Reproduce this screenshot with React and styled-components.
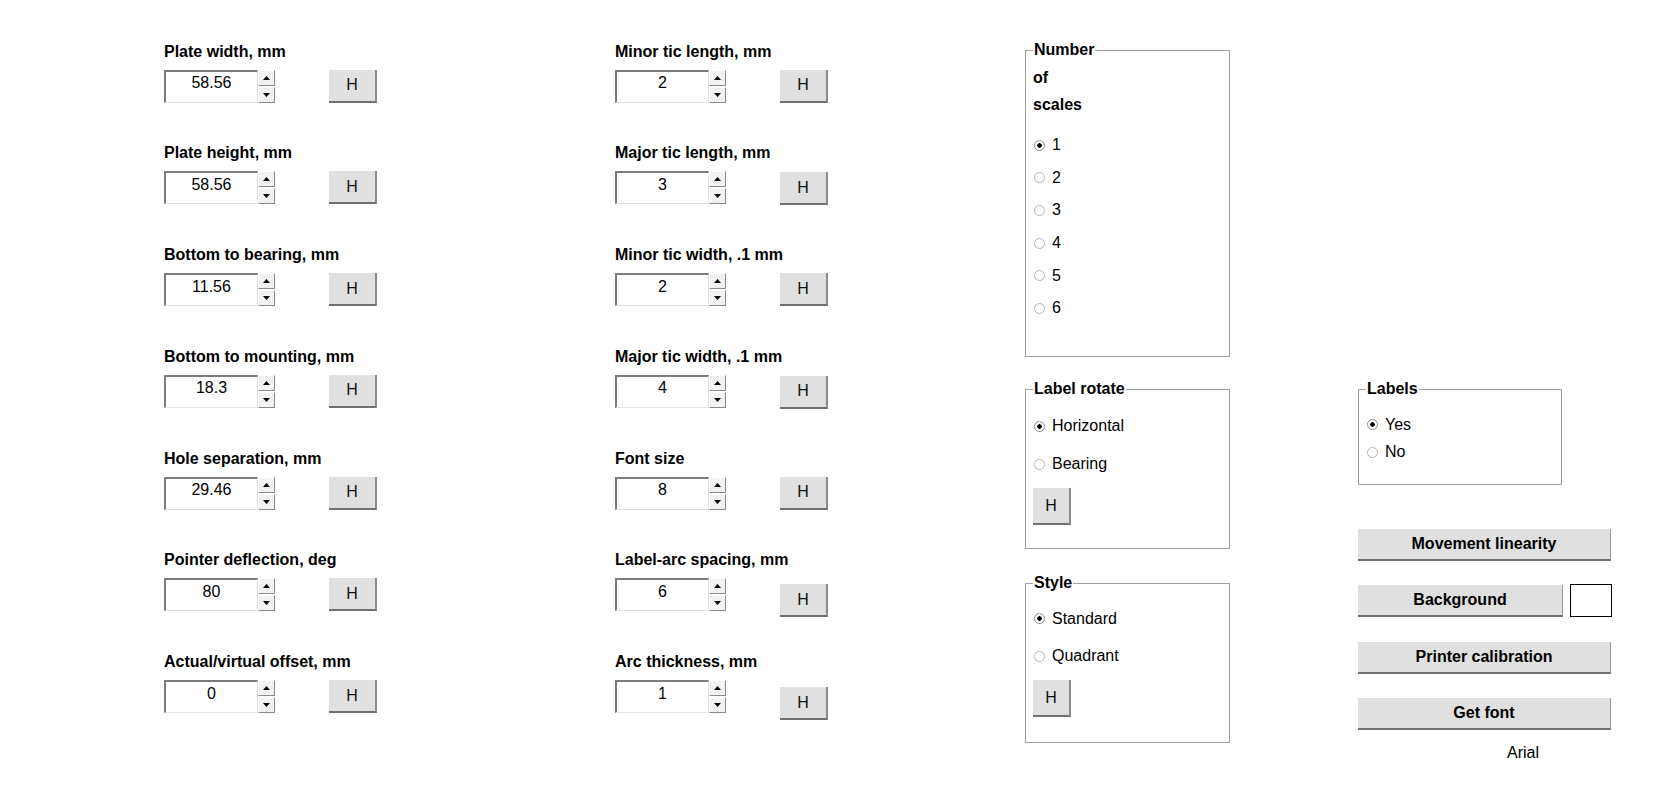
import React from 'react';
import styled, { createGlobalStyle } from 'styled-components';

const GlobalStyle = createGlobalStyle`
  body {
    margin: 0;
    background: #ffffff;
    font-family: "Liberation Sans", Arial, sans-serif;
    color: #000000;
  }
`;

const leftFields = [
  { label: 'Plate width, mm', value: '58.56' },
  { label: 'Plate height, mm', value: '58.56' },
  { label: 'Bottom to bearing, mm', value: '11.56' },
  { label: 'Bottom to mounting, mm', value: '18.3' },
  { label: 'Hole separation, mm', value: '29.46' },
  { label: 'Pointer deflection, deg', value: '80' },
  { label: 'Actual/virtual offset, mm', value: '0' },
];

const midFields = [
  { label: 'Minor tic length, mm', value: '2', drop: 0 },
  { label: 'Major tic length, mm', value: '3', drop: 1 },
  { label: 'Minor tic width, .1 mm', value: '2', drop: 0 },
  { label: 'Major tic width, .1 mm', value: '4', drop: 1 },
  { label: 'Font size', value: '8', drop: 0 },
  { label: 'Label-arc spacing, mm', value: '6', drop: 6 },
  { label: 'Arc thickness, mm', value: '1', drop: 7 },
];

const Spinner = () => (
  <SpinBox>
    <SpinHalf>
      <svg width="7" height="4" viewBox="0 0 7 4"><path d="M0 4 L3.5 0 L7 4 Z" fill="#000" /></svg>
    </SpinHalf>
    <SpinHalf>
      <svg width="7" height="4" viewBox="0 0 7 4"><path d="M0 0 L3.5 4 L7 0 Z" fill="#000" /></svg>
    </SpinHalf>
  </SpinBox>
);

const Field = ({ label, value, gap, drop = 0 }) => (
  <FieldRow>
    <FieldLabel>{label}</FieldLabel>
    <Controls>
      <NumInput defaultValue={value} readOnly />
      <Spinner />
      <HButton $gap={gap} $drop={drop}>H</HButton>
    </Controls>
  </FieldRow>
);

const RadioItem = ({ label, checked, height }) => (
  <RadioRow $h={height}>
    <RadioDot $on={checked} />
    <span>{label}</span>
  </RadioRow>
);

const App = () => (
  <>
    <GlobalStyle />
    <Page>
      <Column $w={451} $mt={1.5}>
        {leftFields.map((f) => (
          <Field key={f.label} {...f} gap={54} />
        ))}
      </Column>
      <Column $w={410} $mt={1.5}>
        {midFields.map((f) => (
          <Field key={f.label} {...f} gap={54} />
        ))}
      </Column>
      <Column $w={333}>
        <Group $w={205} $h={316}>
          <Legend>Number</Legend>
          <LegendRest>
            <div>of</div>
            <div>scales</div>
          </LegendRest>
          <RadioList $top={11}>
            {['1', '2', '3', '4', '5', '6'].map((n) => (
              <RadioItem key={n} label={n} checked={n === '1'} height={32.6} />
            ))}
          </RadioList>
        </Group>
        <Group $w={205} $h={169} $mt={23}>
          <Legend>Label rotate</Legend>
          <RadioList $top={9}>
            <RadioItem label="Horizontal" checked height={38} />
            <RadioItem label="Bearing" height={38} />
          </RadioList>
          <BoxButton>H</BoxButton>
        </Group>
        <Group $w={205} $h={169} $mt={25}>
          <Legend>Style</Legend>
          <RadioList $top={8}>
            <RadioItem label="Standard" checked height={37.5} />
            <RadioItem label="Quadrant" height={37.5} />
          </RadioList>
          <BoxButton>H</BoxButton>
        </Group>
      </Column>
      <SideColumn>
        <Group $w={204} $h={105} $mt={339}>
          <Legend>Labels</Legend>
          <RadioList $top={13}>
            <RadioItem label="Yes" checked height={27.5} />
            <RadioItem label="No" height={27.5} />
          </RadioList>
        </Group>
        <WideButton $mt={44}>Movement linearity</WideButton>
        <ButtonLine>
          <WideButton $w={205}>Background</WideButton>
          <Swatch />
        </ButtonLine>
        <WideButton $mt={25}>Printer calibration</WideButton>
        <WideButton $mt={24}>Get font</WideButton>
        <FontName>Arial</FontName>
      </SideColumn>
    </Page>
  </>
);

const Page = styled.div`
  display: flex;
  align-items: flex-start;
  padding: 41px 0 0 164px;
  font-family: "Liberation Sans", Arial, sans-serif;
  font-size: 16px;
`;

const Column = styled.div`
  width: ${(p) => p.$w}px;
  margin-top: ${(p) => p.$mt || 0}px;
  flex: none;
  display: flex;
  flex-direction: column;
`;

const SideColumn = styled.div`
  width: 256px;
  display: flex;
  flex-direction: column;
`;

const FieldRow = styled.div`
  height: 101.75px;
  display: flex;
  flex-direction: column;
`;

const FieldLabel = styled.div`
  font-weight: bold;
  font-size: 16px;
  line-height: 18px;
  margin-bottom: 9px;
  white-space: nowrap;
`;

const Controls = styled.div`
  display: flex;
  align-items: flex-start;
`;

const NumInput = styled.input`
  box-sizing: border-box;
  width: 94px;
  height: 33px;
  margin: 0;
  padding: 0 0 7px;
  text-align: center;
  font-family: "Liberation Sans", Arial, sans-serif;
  font-size: 16px;
  color: #000;
  background: #fff;
  border-top: 2px solid #7c7c7c;
  border-left: 2px solid #7c7c7c;
  border-right: 1px solid #e2e2e2;
  border-bottom: 1px solid #e2e2e2;
  outline: none;
`;

const SpinBox = styled.div`
  width: 17px;
  height: 33px;
  display: flex;
  flex-direction: column;
  gap: 1px;
`;

const SpinHalf = styled.div`
  box-sizing: border-box;
  flex: 1;
  display: flex;
  align-items: center;
  justify-content: center;
  background: #f2f2f2;
  border-top: 1px solid #ffffff;
  border-left: 1px solid #ffffff;
  border-right: 1px solid #8a8a8a;
  border-bottom: 1px solid #8a8a8a;
`;

const HButton = styled.button`
  box-sizing: border-box;
  width: 48px;
  height: 33px;
  margin: ${(p) => p.$drop}px 0 0 ${(p) => p.$gap}px;
  padding: 0;
  background: #e0e0e0;
  border: none;
  border-right: 2px solid #8c8c8c;
  border-bottom: 2px solid #707070;
  font-family: "Liberation Sans", Arial, sans-serif;
  font-size: 16px;
  color: #111;
`;

const Group = styled.fieldset`
  box-sizing: border-box;
  width: ${(p) => p.$w}px;
  height: ${(p) => p.$h}px;
  margin: ${(p) => p.$mt || 0}px 0 0;
  padding: 0 7px;
  border: 1px solid #a0a0a0;
  min-width: 0;
`;

const Legend = styled.legend`
  padding: 0 1px;
  font-weight: bold;
  font-size: 16px;
  line-height: 18px;
`;

const LegendRest = styled.div`
  font-weight: bold;
  font-size: 16px;
  line-height: 27px;
  padding-top: 5px;
`;

const RadioList = styled.div`
  padding-top: ${(p) => p.$top}px;
  display: flex;
  flex-direction: column;
`;

const RadioRow = styled.div`
  height: ${(p) => p.$h}px;
  display: flex;
  align-items: center;
  gap: 7px;
  font-size: 16px;
  white-space: nowrap;
`;

const RadioDot = styled.span`
  box-sizing: border-box;
  width: 11px;
  height: 11px;
  margin-left: 1px;
  border-radius: 50%;
  border: 1px solid ${(p) => (p.$on ? '#8a8a8a' : '#b4b4b4')};
  background: ${(p) => (p.$on ? 'radial-gradient(circle, #000 0 2px, #fff 2.5px)' : '#fff')};
  flex: none;
`;

const BoxButton = styled.button`
  box-sizing: border-box;
  width: 38px;
  height: 37px;
  margin-top: 5px;
  padding: 0;
  background: #e0e0e0;
  border: none;
  border-right: 2px solid #8c8c8c;
  border-bottom: 2px solid #707070;
  font-family: "Liberation Sans", Arial, sans-serif;
  font-size: 16px;
  color: #111;
`;

const WideButton = styled.button`
  box-sizing: border-box;
  width: ${(p) => p.$w || 253}px;
  height: 32px;
  margin: ${(p) => p.$mt || 0}px 0 0;
  padding: 0;
  background: #e0e0e0;
  border: none;
  border-right: 1px solid #9a9a9a;
  border-bottom: 2px solid #707070;
  font-family: "Liberation Sans", Arial, sans-serif;
  font-weight: bold;
  font-size: 16px;
  color: #000;
`;

const ButtonLine = styled.div`
  display: flex;
  align-items: flex-start;
  gap: 7px;
  margin-top: 24px;
`;

const Swatch = styled.div`
  box-sizing: border-box;
  width: 42px;
  height: 33px;
  margin-top: -1px;
  border: 1px solid #000;
  background: #fff;
`;

const FontName = styled.div`
  margin: 14px 0 0 149px;
  font-size: 16px;
  line-height: 18px;
`;

export default App;
